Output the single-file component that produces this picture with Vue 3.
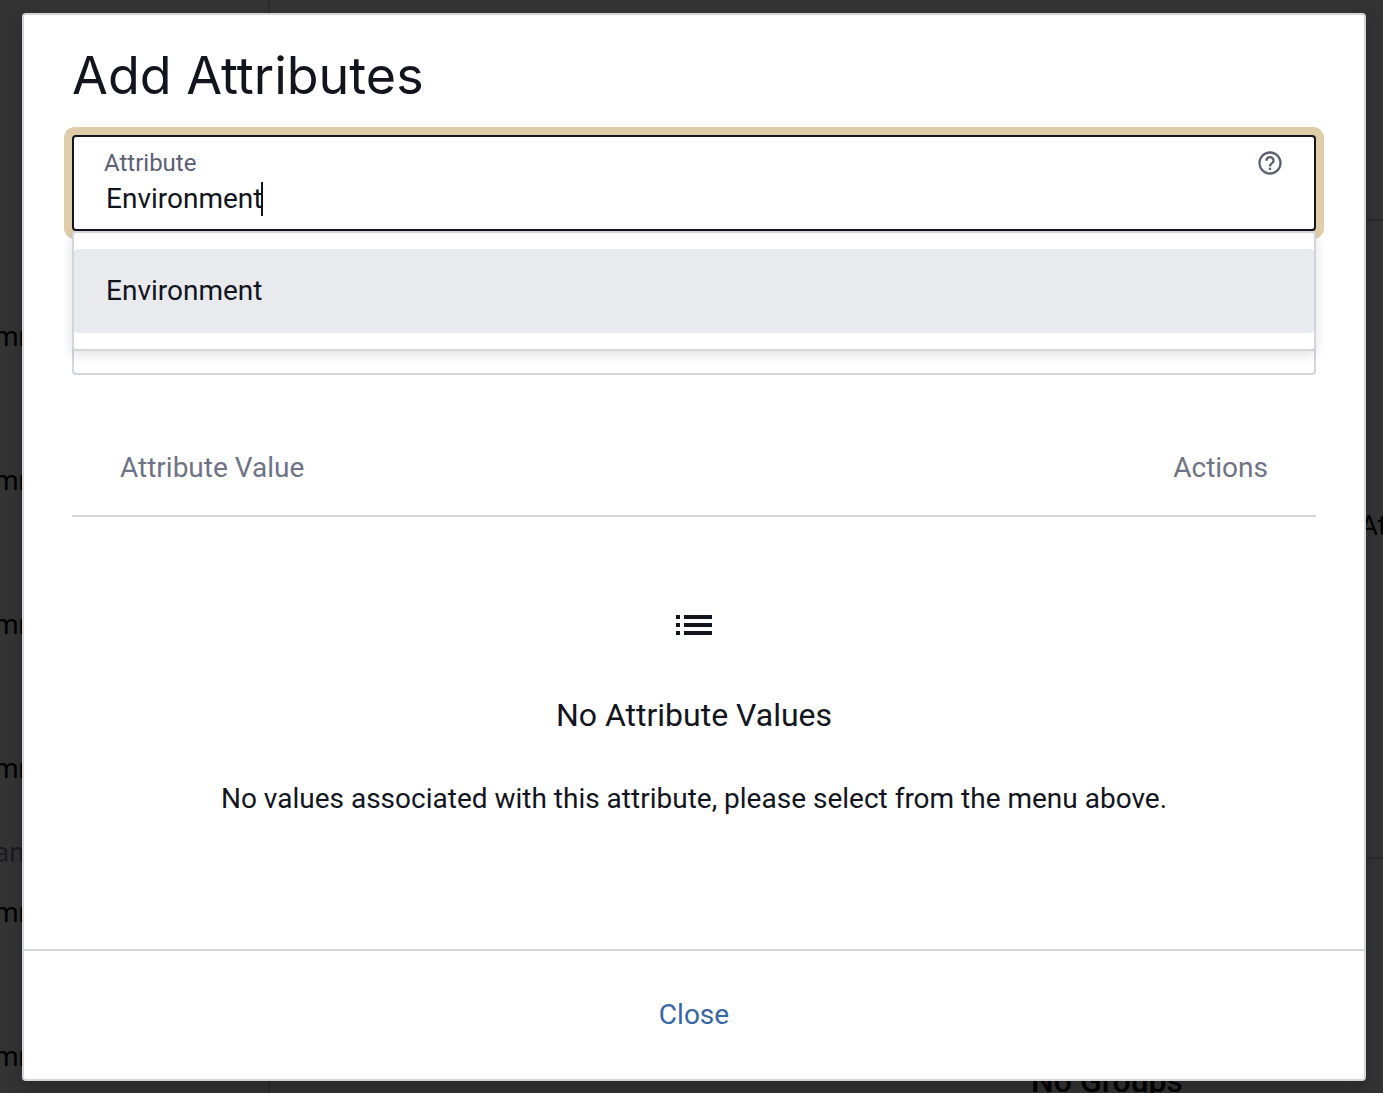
<script setup>
import { ref } from 'vue'

const query = ref('Environment')
const options = ['Environment']
const items = ['mm', 'mm', 'mm', 'mm']
const moreItems = ['mm', 'mm']
</script>

<template>
  <div class="page">
    <div class="backdrop" aria-hidden="true">
      <div class="nav">
        <p v-for="(item, i) in items" :key="i" class="nav-item">{{ item }}</p>
        <p class="nav-group">an</p>
        <p v-for="(item, i) in moreItems" :key="'more' + i" class="nav-item">{{ item }}</p>
      </div>
      <div class="content">
        <div class="content-top"></div>
        <div class="content-middle">At</div>
        <div class="content-bottom">No Groups</div>
      </div>
    </div>

    <section class="dialog" role="dialog" aria-labelledby="dialog-title">
      <div class="dialog-body">
        <h1 id="dialog-title">Add Attributes</h1>

        <div class="combo">
          <div class="field focused">
            <div class="field-main">
              <label for="attribute">Attribute</label>
              <div class="entry">
                <input id="attribute" v-model="query" type="text" autocomplete="off" />
                <span class="caret"></span>
              </div>
            </div>
            <button class="help" type="button" aria-label="Help">
              <svg viewBox="0 0 24 24" width="28" height="28" fill="currentColor">
                <path d="M11 18h2v-2h-2v2zm1-16C6.480 2 2 6.480 2 12s4.480 10 10 10 10-4.480 10-10S17.520 2 12 2zm0 18c-4.410 0-8-3.590-8-8s3.590-8 8-8 8 3.590 8 8-3.590 8-8 8zm0-14c-2.210 0-4 1.790-4 4h2c0-1.100.9-2 2-2s2 .9 2 2c0 2-3 1.750-3 5h2c0-2.250 3-2.500 3-5 0-2.210-1.790-4-4-4z" />
              </svg>
            </button>
          </div>
          <ul class="menu" role="listbox">
            <li v-for="option in options" :key="option" role="option" aria-selected="true">{{ option }}</li>
          </ul>
        </div>

        <input class="field value-field" type="text" aria-label="Attribute value" />

        <table>
          <thead>
            <tr>
              <th>Attribute Value</th>
              <th class="actions">Actions</th>
            </tr>
          </thead>
          <tbody>
            <tr>
              <td colspan="2">
                <svg class="list-icon" viewBox="0 0 24 24" width="48" height="48" fill="currentColor">
                  <path d="M3 13h2v-2H3v2zm0 4h2v-2H3v2zm0-8h2V7H3v2zm4 4h14v-2H7v2zm0 4h14v-2H7v2zM7 7v2h14V7H7z" />
                </svg>
                <h2>No Attribute Values</h2>
                <p>No values associated with this attribute, please select from the menu above.</p>
              </td>
            </tr>
          </tbody>
        </table>
      </div>

      <footer>
        <button class="close" type="button">Close</button>
      </footer>
    </section>
  </div>
</template>

<style>
body {
  background: #333333;
}
</style>

<style scoped>
* {
  box-sizing: border-box;
}

.page {
  position: relative;
  min-height: 100vh;
  padding: 13px 17px 12px 22px;
  overflow: hidden;
  font-family: Roboto, 'Liberation Sans', sans-serif;
  font-size: 28px;
  line-height: 40px;
  color: #12151e;
}

.backdrop {
  position: absolute;
  inset: 0;
  display: flex;
  overflow: hidden;
  color: #000;
}

.nav {
  width: 270px;
  padding-top: 265px;
  border-right: 2px solid #2a2a2a;
}

.nav p {
  margin: 0 0 0 -6px;
}

.nav-item {
  height: 144px;
  line-height: 144px;
}

.nav-group {
  height: 0;
  line-height: 24px;
  color: #1b1b20;
}

.content {
  flex: 1;
  display: flex;
  flex-direction: column;
}

.content > div {
  flex-shrink: 0;
}

.content-top {
  height: 221px;
  border-bottom: 2px solid #2a2a2a;
}

.content-middle {
  height: 638px;
  margin-right: -4px;
  padding-top: 285px;
  border-bottom: 2px solid #2a2a2a;
  text-align: right;
}

.content-bottom {
  padding: 202px 200px 0 0;
  font-size: 32px;
  font-weight: 500;
  text-align: right;
}

.dialog {
  position: relative;
  background: #fff;
  border: 2px solid #d2d5da;
  border-radius: 4px;
  box-shadow: 0 8px 16px rgba(0, 0, 0, 0.2);
}

.dialog-body {
  padding: 24px 48px 0;
}

h1 {
  margin: 0 0 22px;
  font-family: Inter, 'Liberation Sans', sans-serif;
  font-size: 52px;
  font-weight: 400;
  line-height: 74px;
}

.combo {
  position: relative;
}

.field {
  display: flex;
  width: 100%;
  height: 96px;
  border: 2px solid #d2d5da;
  border-radius: 4px;
  background: #fff;
}

.focused {
  border-color: #12151e;
  box-shadow: 0 0 0 8px #dfcca8;
}

.field-main {
  flex: 1;
  padding: 10px 0 0 30px;
}

label {
  display: block;
  font-size: 24px;
  line-height: 32px;
  color: #5c6072;
}

.entry {
  display: flex;
  align-items: center;
  height: 40px;
  padding-left: 2px;
}

.entry input {
  field-sizing: content;
  height: 40px;
  padding: 0;
  border: 0;
  outline: 0;
  background: none;
  font: inherit;
  color: inherit;
}

.caret {
  width: 2px;
  height: 34px;
  margin-left: -1px;
  background: #12151e;
}

.help {
  height: 28px;
  margin: 12px 30px 0 0;
  padding: 0;
  border: 0;
  background: none;
  color: #5c6072;
}

.help svg {
  display: block;
}

.menu {
  position: absolute;
  top: 100%;
  left: 0;
  right: 0;
  margin: 0;
  padding: 16px 0;
  list-style: none;
  background: #fff;
  border: 2px solid #d2d5da;
  border-radius: 4px;
  box-shadow: 0 4px 12px rgba(0, 0, 0, 0.12);
}

.menu li {
  padding: 22px 32px;
  line-height: 40px;
  border-radius: 4px;
  background: #e9eaee;
}

.value-field {
  margin-top: 48px;
}

table {
  width: 100%;
  margin-top: 46px;
  border-spacing: 0;
}

th {
  height: 96px;
  padding: 0 48px;
  border-bottom: 2px solid #d2d5da;
  font-weight: 400;
  text-align: left;
  color: #6f7386;
}

th.actions {
  text-align: right;
}

td {
  padding: 84px 48px 130px;
  text-align: center;
}

.list-icon {
  display: block;
  margin: 0 auto;
}

h2 {
  margin: 46px 0 44px;
  font-size: 32px;
  font-weight: 400;
  line-height: 40px;
}

td p {
  margin: 0;
}

footer {
  display: flex;
  justify-content: center;
  padding: 44px 48px;
  border-top: 2px solid #d2d5da;
}

.close {
  padding: 0;
  border: 0;
  background: none;
  font: inherit;
  color: #3767a3;
}
</style>
